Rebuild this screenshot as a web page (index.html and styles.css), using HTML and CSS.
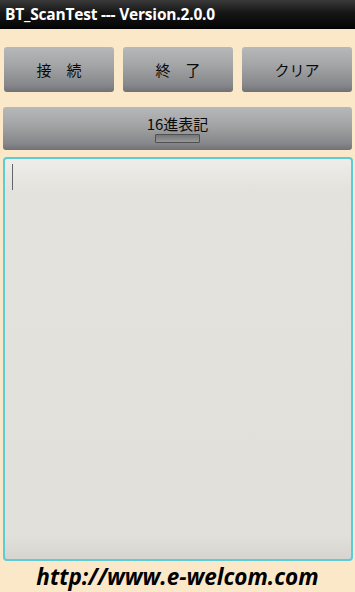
FILE: index.html
```html
<!DOCTYPE html>
<html lang="ja">
<head>
    <meta charset="UTF-8">
    <meta name="viewport" content="width=device-width, initial-scale=1.0">
    <title>BT_ScanTest</title>
    <link rel="stylesheet" href="styles.css">
</head>
<body>
    <div class="title-bar">BT_ScanTest --- Version.2.0.0</div>
    <div class="button-row">
        <button class="gray-button">接　続</button>
        <button class="gray-button">終　了</button>
        <button class="gray-button">クリア</button>
    </div>
    <button class="toggle-button">
        <span class="toggle-label">16進表記</span>
        <span class="toggle-light"></span>
    </button>
    <div class="log-area"><span class="caret"></span></div>
    <div class="footer">http://www.e-welcom.com</div>
</body>
</html>
```

FILE: styles.css
```css
body {
    margin: 0;
    width: 355px;
    height: 592px;
    display: flex;
    flex-direction: column;
    background-color: #fbe8c8;
    font-family: "Open Sans", "Noto Sans CJK JP", sans-serif;
}
.title-bar {
    flex-shrink: 0;
    height: 29px;
    box-sizing: border-box;
    padding: 4px 0 0 5px;
    background: linear-gradient(#3a3a3a, #161616 45%, #050505);
    border-bottom: 1px solid #000;
    color: #fff;
    font-weight: bold;
    font-size: 15.5px;
    line-height: 20px;
    letter-spacing: -0.2px;
}
.button-row {
    flex-shrink: 0;
    display: flex;
    gap: 9px;
    padding: 0 3px 0 4px;
    margin-top: 18px;
}
.gray-button {
    flex: 1;
    height: 45px;
    border: none;
    border-radius: 3px;
    background: linear-gradient(#b6b8ba, #a3a5a7 40%, #85878a 85%, #6f7174);
    color: #0a0a0a;
    font-family: "Noto Sans CJK JP", sans-serif;
    font-size: 15px;
    padding: 0;
}
.toggle-button {
    flex-shrink: 0;
    margin: 15px 3px 0 3px;
    height: 43px;
    border: none;
    border-radius: 3px;
    background: linear-gradient(#b6b8ba, #a3a5a7 40%, #85878a 85%, #6f7174);
    display: flex;
    flex-direction: column;
    align-items: center;
    padding: 7px 0 0 0;
}
.toggle-label {
    color: #0a0a0a;
    font-family: "Noto Sans CJK JP", sans-serif;
    font-size: 15px;
    line-height: 19px;
}
.toggle-light {
    display: block;
    width: 45px;
    height: 9px;
    margin-top: 1px;
    box-sizing: border-box;
    border: 1px solid #505050;
    border-radius: 1px;
    background: linear-gradient(#747678, #96989a);
}
.log-area {
    flex-shrink: 0;
    margin: 7px 2px 0 3px;
    height: 404px;
    box-sizing: border-box;
    border: 2px solid #5ccdd5;
    border-radius: 4px;
    background: linear-gradient(#eeede9, #e4e2dd 8%, #e2e0db 94%, #d6d4cf);
    padding: 5px 0 0 7px;
}
.caret {
    display: block;
    width: 1px;
    height: 26px;
    background-color: #666;
}
.footer {
    flex: 1;
    text-align: center;
    font-weight: bold;
    font-style: italic;
    font-size: 22.5px;
    line-height: 30px;
    color: #000;
    padding-top: 1px;
}
```
